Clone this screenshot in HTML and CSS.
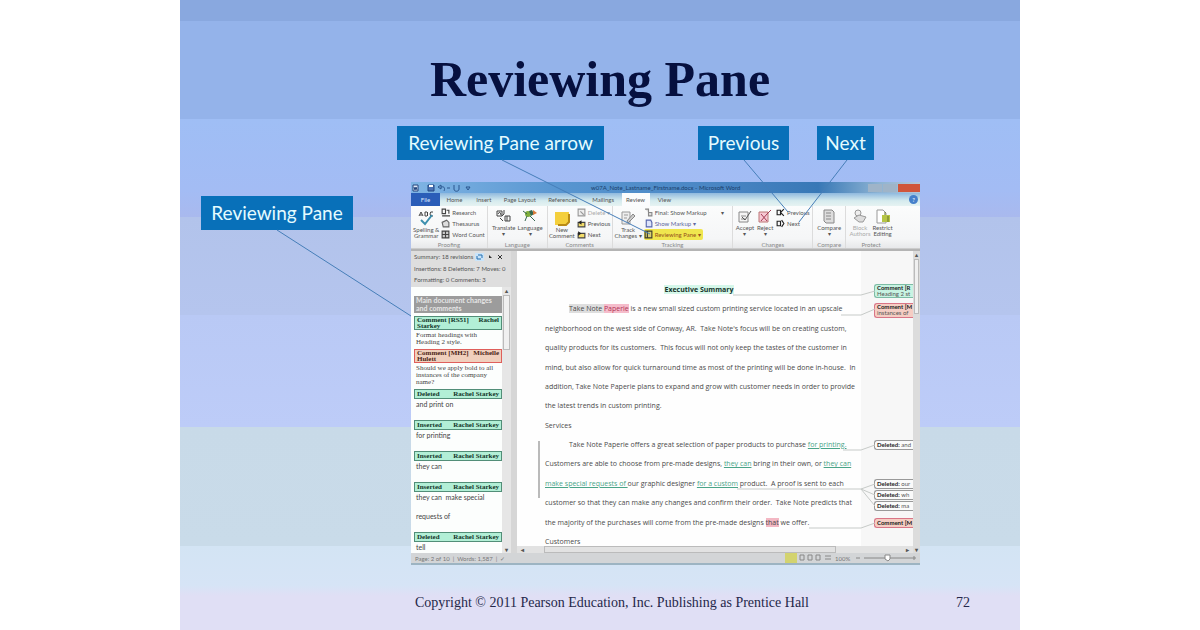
FILE: index.html
```html
<!DOCTYPE html>
<html lang="en">
<head>
    <meta charset="UTF-8">
    <meta name="viewport" content="width=device-width, initial-scale=1.0">
    <title>Reviewing Pane</title>
    <link rel="stylesheet" href="styles.css">
</head>
<body>

<main class="slide">
    <h1>Reviewing Pane</h1>

    <div class="callouts">
        <div class="callout arrow">Reviewing Pane arrow</div>
        <div class="callout prev">Previous</div>
        <div class="callout next">Next</div>
    </div>

    <div class="content">
        <div class="callout side">Reviewing Pane</div>

        <section class="word">
            <header class="titlebar">
                <svg class="quick" viewBox="0 0 62 10">
                    <path d="M2 2h5v6H2zM3 4l1 3 1-3 1 3" fill="#dfeafa" stroke="#24457c"/>
                    <path d="M17 2h6v6h-6z" fill="#4a72b5" stroke="#234682"/>
                    <path d="M18 2h4v2h-4z" fill="#fff"/>
                    <path d="M27 4l3-2v4zM30 4c4-1 4 2 3 4M36 5h3M43 2v4c0 3 5 3 5 0V2M55 4h4l-2 3z" fill="none" stroke="#2b568f"/>
                </svg>
                <span class="doc-name">w07A_Note_Lastname_Firstname.docx - Microsoft Word</span>
                <span class="win-buttons"><i></i><i></i><i class="close"></i></span>
            </header>

            <nav class="tabs">
                <button class="file">File</button>
                <button>Home</button>
                <button>Insert</button>
                <button>Page Layout</button>
                <button>References</button>
                <button>Mailings</button>
                <button class="active">Review</button>
                <button>View</button>
                <button class="help">?</button>
            </nav>

            <div class="ribbon">
                <div class="group">
                    <div class="tools">
                        <button class="big">
                            <svg viewBox="0 0 18 16"><path d="M2 6l2-4 2 4M3 5h2M8 2v4h2q2-1 0-2 2-1 0-2zM16 2q-3-1-3 2t3 2" fill="none" stroke="#444"/><path d="M4 10l4 4 7-9" fill="none" stroke="#3d8fae" stroke-width="2"/></svg>
                            Spelling &amp;<br>Grammar
                        </button>
                        <div class="stack">
                            <button><svg viewBox="0 0 8 8"><path d="M1 1h3v4H1zM5 2h2v3M1 7h7" fill="none" stroke="#444"/></svg>Research</button>
                            <button><svg viewBox="0 0 8 8"><path d="M1 3l4-2 2 2v4H2z" fill="#ddd" stroke="#666"/></svg>Thesaurus</button>
                            <button><svg viewBox="0 0 8 8"><path d="M1 1h6v6H1zM1 4h6M4 1v6" fill="#ccc" stroke="#444"/></svg>Word Count</button>
                        </div>
                    </div>
                    <div class="group-name">Proofing</div>
                </div>
                <div class="group">
                    <div class="tools">
                        <button class="big">
                            <svg viewBox="0 0 18 16"><path d="M2 3h5v5H2zM3 6q2-4 3 1M9 2v4l-2 2M10 8h5v5h-5zM12 8v5M5 10l3 3" fill="none" stroke="#444"/></svg>
                            Translate<br><b>▾</b>
                        </button>
                        <button class="big">
                            <svg viewBox="0 0 18 16"><circle cx="7" cy="6" r="3" fill="#7fae3c"/><path d="M2 3l4 3M9 8l5 5M6 8l-2 5" stroke="#35674f" stroke-width="1"/><path d="M8 3l3-1 2 4-3 2z" fill="#35674f"/><path d="M12 2l4 3-4 2z" fill="#d77b3b"/></svg>
                            Language<br><b>▾</b>
                        </button>
                    </div>
                    <div class="group-name">Language</div>
                </div>
                <div class="group">
                    <div class="tools">
                        <button class="big">
                            <svg viewBox="0 0 18 16"><path d="M2 2h14v10l-3 3H2z" fill="#f4cf3c"/><path d="M16 4v8l-3 3H5" fill="none" stroke="#b98b16" stroke-width="2"/></svg>
                            New<br>Comment
                        </button>
                        <div class="stack">
                            <button class="off"><svg viewBox="0 0 8 8"><path d="M1 1h6v6H1zM3 3l3 3" fill="#eee" stroke="#999"/></svg>Delete ▾</button>
                            <button><svg viewBox="0 0 8 8"><path d="M1 3h6v4H1z" fill="#f2dc6a" stroke="#444"/><path d="M4 1L1 3l3 2z" fill="#222"/></svg>Previous</button>
                            <button><svg viewBox="0 0 8 8"><path d="M1 3h6v4H1z" fill="#f2dc6a" stroke="#444"/><path d="M1 1l3 2-3 2z" fill="#222"/></svg>Next</button>
                        </div>
                    </div>
                    <div class="group-name">Comments</div>
                </div>
                <div class="group">
                    <div class="tools tracking">
                        <button class="big">
                            <svg viewBox="0 0 18 16"><path d="M3 2h8v12H3zM5 5h4M5 8h3" fill="#eee" stroke="#999"/><path d="M8 11l6-7 2 2-7 7z" fill="#ccc" stroke="#888"/></svg>
                            Track<br>Changes ▾
                        </button>
                        <div class="stack">
                            <button><svg viewBox="0 0 8 8"><path d="M1 1h3v3M4 4h3v3H4z" fill="#ddd" stroke="#888"/></svg>Final: Show Markup <span class="drop">▾</span></button>
                            <button class="blue"><svg viewBox="0 0 8 8"><path d="M2 1h4l1 2v4H2z" fill="#dde4fb" stroke="#5867ad"/></svg>Show Markup ▾</button>
                            <button class="marked"><svg viewBox="0 0 8 8"><path d="M1 1h6v6H1zM3 1v6" fill="#d9cf72" stroke="#3c3c30"/></svg>Reviewing Pane ▾</button>
                        </div>
                    </div>
                    <div class="group-name">Tracking</div>
                </div>
                <div class="group">
                    <div class="tools">
                        <button class="big">
                            <svg viewBox="0 0 18 16"><path d="M3 4h9v10H3zM5 8h5M5 11h4" fill="#f5f5f5" stroke="#888"/><path d="M6 9l3 3 6-9" fill="none" stroke="#555"/></svg>
                            Accept<br><b>▾</b>
                        </button>
                        <button class="big">
                            <svg viewBox="0 0 18 16"><path d="M3 4h9v10H3z" fill="#f7c9d4" stroke="#b77"/><path d="M5 6l6 7M11 6l-6 7M11 6l4-4" stroke="#a33d55"/></svg>
                            Reject<br><b>▾</b>
                        </button>
                        <div class="stack">
                            <button><svg viewBox="0 0 8 8"><path d="M1 2h3v4H1zM7 1L4 4l3 3" fill="none" stroke="#222"/></svg>Previous</button>
                            <button><svg viewBox="0 0 8 8"><path d="M1 2h3v4H1zM5 1l2 3-2 3" fill="none" stroke="#222"/></svg>Next</button>
                        </div>
                    </div>
                    <div class="group-name">Changes</div>
                </div>
                <div class="group">
                    <div class="tools">
                        <button class="big">
                            <svg viewBox="0 0 18 16"><path d="M4 2h8l2 2v11H6l-2-2zM6 5h5M6 8h5M6 11h5" fill="#ddd" stroke="#888"/></svg>
                            Compare<br><b>▾</b>
                        </button>
                    </div>
                    <div class="group-name">Compare</div>
                </div>
                <div class="group protect">
                    <div class="tools">
                        <button class="big off">
                            <svg viewBox="0 0 18 16"><circle cx="7" cy="5" r="3" fill="#eee" stroke="#999"/><path d="M3 10l5-3 7 2-3 5H8z" fill="#ddd" stroke="#999"/></svg>
                            Block<br>Authors
                        </button>
                        <button class="big">
                            <svg viewBox="0 0 18 16"><path d="M3 2h6l3 3v10H3z" fill="#fff" stroke="#999"/><path d="M8 7h8v7H8z" fill="#b6c545"/><path d="M11 7V4M14 8v6" stroke="#66752a"/></svg>
                            Restrict<br>Editing
                        </button>
                    </div>
                    <div class="group-name">Protect</div>
                </div>
            </div>

            <div class="work">
                <aside class="pane">
                    <div class="summary">
                        <p>Summary: 18 revisions
                            <svg viewBox="0 0 30 8"><path d="M0 0h9v8H0z" fill="#c9e4fa"/><path d="M3 2h4v3M6 6H2V3" fill="none" stroke="#256fae"/><path d="M14 2l3 3h-3z" fill="#333"/><path d="M23 2l4 4M27 2l-4 4" stroke="#333"/></svg>
                        </p>
                        <p>Insertions: 8 Deletions: 7 Moves: 0</p>
                        <p>Formatting: 0 Comments: 3</p>
                    </div>
                    <div class="list-row">
                        <div class="list">
                            <div class="heading">Main document changes and comments</div>
                            <div class="tag two"><span>Comment [RS51]</span><span>Rachel</span><span>Starkey</span></div>
                            <p class="note">Format headings with Heading 2 style.</p>
                            <div class="tag two red"><span>Comment [MH2]</span><span>Michelle</span><span>Hulett</span></div>
                            <p class="note">Should we apply bold to all instances of the company name?</p>
                            <div class="tag"><span>Deleted</span><span>Rachel Starkey</span></div>
                            <p class="change">and print on</p>
                            <div class="tag"><span>Inserted</span><span>Rachel Starkey</span></div>
                            <p class="change">for printing</p>
                            <div class="tag"><span>Inserted</span><span>Rachel Starkey</span></div>
                            <p class="change">they can</p>
                            <div class="tag"><span>Inserted</span><span>Rachel Starkey</span></div>
                            <p class="change long">they can&nbsp; make special<br>requests of</p>
                            <div class="tag"><span>Deleted</span><span>Rachel Starkey</span></div>
                            <p class="change">tell</p>
                        </div>
                        <div class="scroll"><b>▴</b><i></i><b>▾</b></div>
                    </div>
                </aside>

                <div class="view">
                    <div class="document">
                        <article class="page">
                            <p class="center"><mark>Executive Summary</mark></p>
                            <p class="indent"><span class="shade">Take Note <em>Paperie</em></span> is a new small sized custom printing service located in an upscale</p>
                            <p>neighborhood on the west side of Conway, AR.&nbsp; Take Note's focus will be on creating custom,</p>
                            <p>quality products for its customers.&nbsp; This focus will not only keep the tastes of the customer in</p>
                            <p>mind, but also allow for quick turnaround time as most of the printing will be done in-house.&nbsp; In</p>
                            <p>addition, Take Note Paperie plans to expand and grow with customer needs in order to provide</p>
                            <p>the latest trends in custom printing.</p>
                            <p>Services</p>
                            <p class="indent">Take Note Paperie offers a great selection of paper products to purchase <ins>for printing.</ins></p>
                            <p>Customers are able to choose from pre-made designs, <ins>they can</ins> bring in their own, or <ins>they can</ins></p>
                            <p><ins>make special requests of </ins>our graphic designer <ins>for a custom</ins> product.&nbsp; A proof is sent to each</p>
                            <p>customer so that they can make any changes and confirm their order.&nbsp; Take Note predicts that</p>
                            <p>the majority of the purchases will come from the pre-made designs <span class="pink">that</span> we offer.</p>
                            <p>Customers</p>
                            <svg class="leaders" viewBox="0 0 358 295">
                                <path d="M216 44h128l14-4M324 64h20l14-6M326 199h18l14-5M220 238h124l14-5M344 238l14 6M344 238l14 17M292 277h52l14-5" fill="none" stroke="#c6cac8"/>
                                <path d="M22 190v57" stroke="#777"/>
                            </svg>
                        </article>
                        <div class="balloons">
                            <div class="balloon green"><b>Comment [R</b><br>Heading 2 st</div>
                            <div class="balloon rose"><b>Comment [M</b><br>instances of</div>
                            <div class="balloon far"><b>Deleted:</b> and</div>
                            <div class="balloon third"><b>Deleted:</b> our</div>
                            <div class="balloon near"><b>Deleted:</b> wh</div>
                            <div class="balloon near"><b>Deleted:</b> ma</div>
                            <div class="balloon rose last"><b>Comment [M</b></div>
                        </div>
                    </div>
                    <div class="hscroll"><b>◂</b><i></i><b>▸</b></div>
                </div>
                <div class="scroll main-scroll"><b>▴</b><i></i><b>▾</b></div>
            </div>

            <footer class="status">
                <span>Page: 2 of 10&nbsp; |&nbsp; Words: 1,587&nbsp; |&nbsp; ✓</span>
                <svg viewBox="0 0 136 10">
                    <path d="M1 0h12v10H1z" fill="#d3d36f"/>
                    <path d="M16 2h4v5h-4zM24 2h4v5h-4zM32 2h4v5h-4zM41 3h6M41 6h6" fill="none" stroke="#888"/>
                    <path d="M72 5h4M80 5h48M128 5h4M130 3v4" stroke="#888"/>
                    <path d="M101 2h5v4l-2 2-3-2z" fill="#fff" stroke="#888"/>
                    <text x="51" y="8">100%</text>
                </svg>
            </footer>
        </section>
    </div>

    <svg class="pointers" viewBox="0 0 840 630">
        <path d="M322 160L470 234M564 160L608 212M667 160L619 222M97 230L231 316"/>
    </svg>

    <footer class="credits">
        <span>Copyright © 2011 Pearson Education, Inc. Publishing as Prentice Hall</span>
        <span>72</span>
    </footer>
</main>

</body>
</html>
```
FILE: styles.css
```css
* {
    box-sizing: border-box;
}

body {
    margin: 0;
    background-color: #fff;
    font-family: Lato, "Liberation Sans", sans-serif;
}

p {
    margin: 0;
}

button {
    padding: 0;
    border: 0;
    background: none;
    font: inherit;
    color: inherit;
}

.slide {
    position: relative;
    display: flex;
    flex-direction: column;
    max-width: 840px;
    min-height: 100vh;
    margin: 0 auto;
    /* flat colour bands */
    background: linear-gradient(#89a8df 21px, #94b3ea 21px, #94b3ea 119px, #9fbef5 119px, #a3bcf4 190px, #a9b9ee 217px, #b2c3eb 217px, #b5c5ee 315px, #b9c9f5 315px, #bdccf8 427px, #c8dae8 427px, #c9dbe9 546px, #d3e4f4 546px, #d6e4f6 585px, #e0dff5 596px);
}

h1 {
    margin: 0;
    padding-top: 50px;
    font: bold 50px/58px "Liberation Serif", serif;
    text-align: center;
    color: #06103f;
}

.callouts {
    display: flex;
    padding: 18px 0 22px 217px;
}

.callout {
    flex: none;
    background-color: #0870b9;
    color: #e4fbff;
    font-size: 19px;
    line-height: 34px;
    text-align: center;
    white-space: nowrap;
}

.arrow {
    width: 207px;
}

.prev {
    width: 91px;
    margin-left: 94px;
}

.next {
    width: 57px;
    margin-left: 28px;
}

.content {
    display: flex;
    align-items: flex-start;
    padding: 0 100px 0 21px;
}

.side {
    width: 152px;
    margin-top: 14px;
}

/* Word window */
.word {
    display: flex;
    flex-direction: column;
    flex: 1;
    min-width: 0;
    min-height: 382px;
    margin-left: 58px;
    overflow: hidden;
    background-color: #f2f3f4;
    color: #555;
    font-size: 6px;
    line-height: 7px;
    white-space: nowrap;
}

.titlebar {
    display: flex;
    align-items: center;
    justify-content: space-between;
    height: 11px;
    background: linear-gradient(90deg, #7fb4e4, #5795d0 30%, #4a86c4 60%, #3878b6 80%, #8db3d3 92%, #b4c6d8);
}

.quick {
    width: 62px;
    height: 10px;
}

.doc-name {
    margin-left: 118px;
    color: #1c3f6c;
}

.win-buttons {
    display: flex;
    gap: 1px;
    margin-left: auto;
}

.win-buttons i {
    width: 14px;
    height: 8px;
    background-color: #9fb4c8;
}

.win-buttons .close {
    width: 22px;
    background-color: #d0553a;
}

.tabs {
    display: grid;
    grid-template-columns: 29fr 29fr 30fr 42fr 44fr 37fr 28fr 30fr 241fr;
    height: 13px;
    background: linear-gradient(#8fb9de, #d6ebee 60%, #e6f3f2);
}

.tabs .file {
    background-color: #2a5db8;
    color: #dbe8ff;
}

.tabs .active {
    background-color: #fbfcfd;
}

.tabs .help {
    justify-self: end;
    width: 9px;
    height: 9px;
    margin: 2px;
    border-radius: 50%;
    background-color: #4580cb;
    color: #fff;
}

.ribbon {
    display: grid;
    grid-template-columns: 77fr 60fr 65fr 121fr 80fr 33fr 74fr;
    height: 43px;
    border-bottom: 1px solid #ccc;
    background: linear-gradient(#fbfcfc, #f5f6f7 78%, #e7e8ea);
}

.group {
    display: flex;
    flex-direction: column;
    justify-content: space-between;
    min-width: 0;
    border-right: 1px solid #dcdcdc;
    overflow: hidden;
}

.protect {
    padding-right: 24px;
    border: 0;
}

.tools {
    display: flex;
    justify-content: center;
    gap: 2px;
}

.tracking {
    justify-content: flex-start;
    padding-left: 2px;
}

.drop {
    margin-left: 12px;
}

.big {
    line-height: 6px;
}

.big svg {
    display: block;
    width: 18px;
    height: 16px;
    margin: 2px auto 1px;
}

.big b {
    font-weight: normal;
}

.stack {
    display: flex;
    flex-direction: column;
    align-items: flex-start;
    padding-top: 1px;
}

.stack button {
    display: flex;
    align-items: center;
    gap: 2px;
    height: 11px;
}

.stack svg {
    width: 9px;
    height: 9px;
}

.off {
    color: #aaa;
}

.blue {
    color: #6068a0;
}

.stack .marked {
    padding-right: 2px;
    border-radius: 2px;
    background-color: #f0e64e;
    color: #96501c;
}

.group-name {
    text-align: center;
    color: #888;
}

.work {
    display: flex;
    flex: 1;
    border-top: 2px solid #b4b4b4;
}

/* left reviewing pane */
.pane {
    display: flex;
    flex-direction: column;
    flex: none;
    width: 100px;
    background-color: #dedede;
}

.summary {
    display: flex;
    flex-direction: column;
    gap: 4px;
    padding: 2px 3px 4px;
    overflow: hidden;
}

.summary svg {
    width: 30px;
    height: 8px;
    vertical-align: top;
}

.list-row {
    display: flex;
    flex: 1;
}

.list {
    flex: 1;
    height: 266px;
    padding: 9px 0 0 3px;
    overflow: hidden;
    background-color: #fcfefd;
    color: #444;
    font-family: "Liberation Serif", serif;
    font-size: 7px;
    line-height: 8px;
    white-space: normal;
}

.heading {
    height: 17px;
    margin-bottom: 3px;
    padding-left: 2px;
    background-color: #9c9c9c;
    color: #e6e6e6;
    font: bold 7px/8px Lato, sans-serif;
}

.tag {
    display: flex;
    flex-wrap: wrap;
    justify-content: space-between;
    padding: 0 2px;
    border: 1px solid #528e78;
    background-color: #b2efd6;
    color: #12362a;
    font-weight: bold;
    line-height: 8px;
}

.two {
    line-height: 6px;
}

.two span:last-child {
    width: 100%;
}

.red {
    border-color: #df5f5b;
    background-color: #f0cfbd;
    color: #4d1f16;
}

.note {
    padding: 2px 2px 3px;
    line-height: 7px;
}

.change {
    height: 21px;
    padding-left: 2px;
    font: 7px/11px Lato, sans-serif;
}

.long {
    height: 40px;
    line-height: 19px;
    margin-top: -4px;
    margin-bottom: 4px;
}

.scroll {
    display: flex;
    flex-direction: column;
    width: 9px;
    background-color: #e6e6e6;
    text-align: center;
}

.scroll i {
    height: 55px;
    margin: 1px;
    border: 1px solid #bbb;
    background-color: #f0f0f0;
}

.scroll b:last-child {
    margin-top: auto;
}

/* document */
.view {
    display: flex;
    flex-direction: column;
    flex: 1;
    min-width: 0;
    border-left: 6px solid #d6d6d6;
}

.document {
    display: flex;
    flex: 1;
    background-color: #f7f7f7;
}

.page {
    position: relative;
    display: flex;
    flex-direction: column;
    justify-content: space-between;
    flex: 1;
    min-width: 0;
    padding: 34px 8px 0 28px;
    background-color: #fefefe;
    color: #4a4a4a;
    font-family: "Open Sans", sans-serif;
    font-size: 7px;
    line-height: 9px;
}

.center {
    text-align: center;
    font-weight: bold;
}

.indent {
    padding-left: 24px;
}

mark {
    background-color: #d5f7ea;
    color: #17352b;
}

.shade {
    background-color: #dedede;
}

.shade em {
    background-color: #f5bccb;
    color: #b03456;
    font-style: normal;
}

ins {
    color: #4aa488;
}

.pink {
    background-color: #f3b7c3;
}

.leaders {
    position: absolute;
    top: 0;
    left: 0;
    width: 358px;
    height: 295px;
}

.balloons {
    flex: none;
    width: 52px;
    padding: 33px 0 0 13px;
    overflow: hidden;
}

.balloon {
    height: 10px;
    padding-left: 2px;
    border: 1px solid #999;
    border-right: 0;
    border-radius: 3px 0 0 3px;
    background-color: #fafafa;
    color: #555;
    line-height: 8px;
    overflow: hidden;
}

.balloon b {
    color: #222;
}

.green {
    height: 14px;
    border-color: #7dbca5;
    background-color: #c7f3e2;
    line-height: 6px;
}

.rose {
    height: 15px;
    margin-top: 5px;
    border-color: #d97587;
    background-color: #f5cdc3;
    line-height: 6px;
}

.far {
    margin-top: 122px;
}

.third {
    margin-top: 29px;
}

.near {
    margin-top: 1px;
}

.last {
    height: 10px;
    margin-top: 7px;
    line-height: 8px;
}

.hscroll {
    display: flex;
    justify-content: space-between;
    height: 7px;
    padding: 0 4px;
    background-color: #e2e2e2;
}

.hscroll i {
    flex: 1;
    margin: 0 70px 0 20px;
    border: 1px solid #bbb;
}

.main-scroll {
    width: 7px;
    background-color: #dcdcdc;
}

.status {
    display: flex;
    align-items: center;
    justify-content: space-between;
    height: 12px;
    padding-left: 4px;
    border-bottom: 2px solid #9db4c2;
    background-color: #d3d5d7;
    color: #777;
}

.status svg {
    width: 136px;
    height: 10px;
}

.status text {
    fill: #777;
    font-size: 6px;
}

.pointers {
    position: absolute;
    top: 0;
    left: 0;
    width: 840px;
    height: 630px;
    pointer-events: none;
}

.pointers path {
    fill: none;
    stroke: #467eb8;
}

.credits {
    display: flex;
    justify-content: space-between;
    padding: 29px 50px 20px 235px;
    color: #25284a;
    font: 14px/17px "Liberation Serif", serif;
}
```
